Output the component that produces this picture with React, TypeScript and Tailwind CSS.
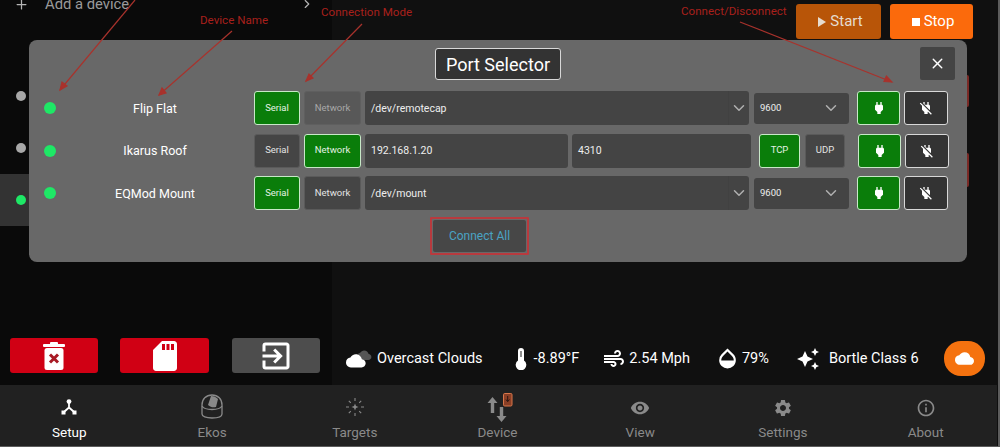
import { ChevronDown, ChevronRight, Plus, X } from "lucide-react";
import {
  MdAir,
  MdAutoAwesome,
  MdCloud,
  MdExitToApp,
  MdInfoOutline,
  MdOpacity,
  MdPower,
  MdPowerOff,
  MdSdCard,
  MdSettings,
  MdVisibility,
} from "react-icons/md";

const CLOUD =
  "M19.35 10.04C18.67 6.59 15.64 4 12 4 9.11 4 6.6 5.64 5.35 8.04 2.34 8.36 0 10.91 0 14c0 3.31 2.69 6 6 6h13c2.76 0 5-2.24 5-5 0-2.64-2.05-4.78-4.65-4.96z";

function TrashIcon() {
  return (
    <svg width="24" height="30" viewBox="0 0 24 30">
      <rect x="1" y="3" width="22" height="3" rx="1" fill="#fff" />
      <rect x="8" y="1" width="8" height="3" rx="1" fill="#fff" />
      <rect x="2.5" y="7" width="19" height="22" rx="2.5" fill="#fff" />
      <path d="M8 13.5l8 8M16 13.5l-8 8" stroke="#a81a24" strokeWidth="3" />
    </svg>
  );
}

function OvercastIcon() {
  return (
    <svg width="26" height="20" viewBox="0 0 26 20">
      <path d={CLOUD} fill="#555" transform="translate(11 -1) scale(0.6)" />
      <path d={CLOUD} fill="#fff" transform="translate(0 2) scale(0.82)" />
    </svg>
  );
}

function ThermometerIcon() {
  return (
    <svg width="12" height="22" viewBox="0 0 12 22">
      <path d="M3 3a3 3 0 0 1 6 0v9.6a5.3 5.3 0 1 1-6 0z" fill="#fff" />
      <rect x="5.4" y="3" width="1.2" height="6" fill="#444" />
    </svg>
  );
}

function HubIcon() {
  return (
    <svg width="16" height="16" viewBox="0 0 16 16" fill="#fff">
      <circle cx="8" cy="2.6" r="2.4" />
      <path d="M8 4v4.5L3.5 12.5M8 8.5l4.5 4" stroke="#fff" strokeWidth="1.8" fill="none" />
      <rect x="0.5" y="11.5" width="4" height="4" />
      <rect x="11.5" y="11.5" width="4" height="4" />
    </svg>
  );
}

function DomeIcon() {
  return (
    <svg width="22" height="25" viewBox="0 0 22 25" fill="none" stroke="#8a8a8a" strokeWidth="1.3">
      <path d="M1 11C1 5 5 1 11 1s10 4 10 10v9c0 2.5-4 4-10 4S1 22.5 1 20z" />
      <path d="M1 12c1.5 2.5 5 3.5 10 3.5s8.5-1 10-3.5" />
      <path d="M7 11l3-9c3 0 5 1 7 3l-2 8c-3 .6-5 .6-8-2z" fill="#8a8a8a" stroke="none" />
    </svg>
  );
}

function TargetIcon() {
  return (
    <svg width="18" height="18" viewBox="0 0 18 18" fill="#8a8a8a" stroke="#8a8a8a">
      <path d="M9 5.5L10 8l2.5 1L10 10l-1 2.5L8 10 5.5 9 8 8z" stroke="none" />
      <path
        d="M9 0v3M9 15v3M0 9h3M15 9h3M2.8 2.8l2 2M13.2 13.2l2 2M15.2 2.8l-2 2M4.800 13.2l-2 2"
        strokeWidth="1.1"
        fill="none"
      />
    </svg>
  );
}

function DeviceIcon() {
  return (
    <svg width="32" height="30" viewBox="0 0 32 30">
      <path d="M11.5 4l5 6h-3.300v10H9.800V10H6.500z" fill="#8a8a8a" />
      <path d="M18.800 14h3.400v9h3.300l-5 6-5-6h3.300z" fill="#8a8a8a" />
      <rect x="22.500" y="0.500" width="8.500" height="12.500" rx="1.200" fill="#8a3f26" stroke="#d9774b" />
      <path d="M26.700 3v5M25 6.500l1.700 2.200 1.700-2.200" stroke="#2a1410" strokeWidth="1" fill="none" />
    </svg>
  );
}

function ModeButton({
  label,
  active,
  disabled,
  className,
}: {
  label: string;
  active?: boolean;
  disabled?: boolean;
  className: string;
}) {
  return (
    <button
      className={`${className} h-full shrink-0 rounded-[3px] border text-[9.500px] ${
        active
          ? "border-[#c8e8c8] bg-[#0a7d0a] text-[#e4f2e4]"
          : disabled
            ? "border-[#5f5f5f] bg-[#585858] text-[#a8a8a8]"
            : "border-[#5a5a5a] bg-[#454545] text-[#e4e4e4]"
      }`}
    >
      {label}
    </button>
  );
}

function ConnectButtons({ className }: { className?: string }) {
  return (
    <div className={`flex h-full shrink-0 gap-1 ${className ?? ""}`}>
      <button className="flex h-full w-[43px] items-center justify-center rounded-[3px] border border-[#c8e8c8] bg-[#0a7d0a]">
        <MdPower size={16} color="#fff" />
      </button>
      <button className="flex h-full w-[44px] items-center justify-center rounded-[3px] border border-[#d8d8d8] bg-[#333333]">
        <MdPowerOff size={16} color="#fff" />
      </button>
    </div>
  );
}

function TextField({ value, className }: { value: string; className: string }) {
  return (
    <div className={`${className} flex h-full items-center rounded-[3px] bg-[#444444] pl-[6px] pt-px text-[10.500px] text-[#eeeeee]`}>
      {value}
    </div>
  );
}

function SerialRow({ name, port, networkDisabled }: { name: string; port: string; networkDisabled?: boolean }) {
  return (
    <div className="flex h-[34px] items-center">
      <span className="ml-[15px] h-3 w-3 shrink-0 rounded-full bg-[#1ee866]" />
      <span className="w-[198px] shrink-0 pt-[2px] text-center text-[12.500px] text-white">{name}</span>
      <ModeButton label="Serial" active className="w-[46px]" />
      <ModeButton label="Network" disabled={networkDisabled} className="ml-1 w-[57px]" />
      <div className="ml-1 flex h-full w-[384px] shrink-0">
        <TextField value={port} className="flex-1 rounded-r-none" />
        <div className="flex w-[21px] items-center justify-center rounded-r-[3px] border-l border-[#414141] bg-[#444444]">
          <ChevronDown size={18} color="#b0b0b0" />
        </div>
      </div>
      <div className="ml-[5px] flex h-[31px] w-[95px] shrink-0 items-center justify-between rounded-[3px] bg-[#444444] pl-[6px] pr-[9px] text-[9.500px] text-[#eeeeee]">
        9600
        <ChevronDown size={18} color="#b0b0b0" />
      </div>
      <ConnectButtons className="ml-2" />
    </div>
  );
}

function NetworkRow() {
  return (
    <div className="flex h-[34px] items-center">
      <span className="ml-[15px] h-3 w-3 shrink-0 rounded-full bg-[#1ee866]" />
      <span className="w-[198px] shrink-0 pt-[2px] text-center text-[12.500px] text-white">Ikarus Roof</span>
      <ModeButton label="Serial" className="w-[46px]" />
      <ModeButton label="Network" active className="ml-1 w-[57px]" />
      <TextField value="192.168.1.20" className="ml-1 w-[203px] shrink-0" />
      <TextField value="4310" className="ml-1 w-[179px] shrink-0" />
      <ModeButton label="TCP" active className="ml-2 w-[41px]" />
      <ModeButton label="UDP" className="ml-[5px] w-[40px]" />
      <ConnectButtons className="ml-[13px]" />
    </div>
  );
}

function PortSelector() {
  return (
    <div className="absolute left-[29px] top-[40px] h-[222px] w-[938px] rounded-lg bg-[#686868]">
      <div className="grid grid-cols-[1fr_126px_1fr] px-3 pt-[7px]">
        <span />
        <div className="mt-px flex h-8 items-center justify-center rounded-[3px] border border-[#d8d8d8] bg-[#333333] text-[18px] text-white">
          Port Selector
        </div>
        <button className="flex h-[33px] w-[35px] items-center justify-center justify-self-end rounded-[2px] bg-[#444444]">
          <X size={17} color="#fff" strokeWidth={2} />
        </button>
      </div>
      <div className="mt-[11px] flex flex-col gap-[8.500px]">
        <SerialRow name="Flip Flat" port="/dev/remotecap" networkDisabled />
        <NetworkRow />
        <SerialRow name="EQMod Mount" port="/dev/mount" />
      </div>
      <div className="ml-[401px] mt-[7px] h-[38px] w-[99px] rounded-[1px] border-2 border-[#b83a3e] p-px">
        <button className="h-full w-full rounded-[2px] bg-[#474747] text-[12px] text-[#4aa3c4]">Connect All</button>
      </div>
    </div>
  );
}

function Annotations() {
  return (
    <>
      <svg className="absolute left-0 top-0" width="1000" height="447" fill="none" stroke="#a8322c" strokeWidth="1.200">
        <path d="M135 0L60 90" />
        <path d="M60 90l2-8 5 4z" fill="#a8322c" />
        <path d="M232 31L159 95" />
        <path d="M159 95l3-7 4 5z" fill="#a8322c" />
        <path d="M362 24L306 81" />
        <path d="M306 81l3-7 4 4z" fill="#a8322c" />
        <path d="M740 22L892 82" />
        <path d="M892 82l-8-.5 2.400-5.500z" fill="#a8322c" />
      </svg>
      <span className="absolute left-[200px] top-[12px] text-[11.600px] leading-4 text-[#a8201c]">Device Name</span>
      <span className="absolute left-[321px] top-[4px] text-[11.600px] leading-4 text-[#a8201c]">Connection Mode</span>
      <span className="absolute left-[681px] top-[3px] text-[11.600px] leading-4 text-[#a8201c]">Connect/Disconnect</span>
    </>
  );
}

const tabs = [
  { label: "Setup", icon: <HubIcon />, iconClass: "pb-[8px]", active: true },
  { label: "Ekos", icon: <DomeIcon />, iconClass: "pb-[4px]" },
  { label: "Targets", icon: <TargetIcon />, iconClass: "pb-[7px]" },
  { label: "Device", icon: <DeviceIcon />, iconClass: "pb-0" },
  { label: "View", icon: <MdVisibility size={20} color="#8a8a8a" />, iconClass: "pb-[5px]" },
  { label: "Settings", icon: <MdSettings size={20} color="#8a8a8a" />, iconClass: "pb-[5px]" },
  { label: "About", icon: <MdInfoOutline size={20} color="#8a8a8a" />, iconClass: "pb-[5px]" },
];

export default function App() {
  return (
    <div className="h-[447px] w-[1000px] overflow-hidden bg-[#5c5c5c] font-['Roboto',sans-serif]">
      <div className="relative flex h-[446px] w-[998px] flex-col overflow-hidden bg-[#0e0e0e]">
        <div className="flex h-[385px]">
          <aside className="flex w-[332px] shrink-0 flex-col bg-[#0a0a0a]">
            <div className="-mt-[16px] flex h-10 items-center pl-[14px] pr-[18px] text-[14.800px] text-[#9a9a9a]">
              <Plus size={15} color="#b5b5b5" />
              <span className="ml-[16px] flex-1">Add a device</span>
              <ChevronRight size={14} color="#b5b5b5" />
            </div>
            <div className="mt-[46px] flex flex-col">
              <div className="flex h-[52px] items-center pl-[16px]">
                <span className="h-[10px] w-[10px] rounded-full bg-[#a8a8a8]" />
              </div>
              <div className="flex h-[52px] items-center pl-[16px]">
                <span className="h-[10px] w-[10px] rounded-full bg-[#a8a8a8]" />
              </div>
              <div className="flex h-[52px] items-center bg-[#333333] pl-[16px]">
                <span className="h-[10px] w-[10px] rounded-full bg-[#1ee866]" />
              </div>
            </div>
            <div className="mt-auto flex pb-3 pl-[10px]">
              <button className="flex h-[35px] w-[88px] items-center justify-center rounded-[3px] bg-[#d00014]">
                <TrashIcon />
              </button>
              <button className="ml-[22px] flex h-[35px] w-[89px] items-center justify-center rounded-[3px] bg-[#d00014]">
                <MdSdCard size={36} color="#fff" />
              </button>
              <button className="ml-[23px] flex h-[35px] w-[88px] items-center justify-center rounded-[3px] bg-[#4d4d4d]">
                <MdExitToApp size={36} color="#fff" />
              </button>
            </div>
          </aside>

          <main className="flex flex-1 flex-col justify-between bg-[#101010]">
            <div className="flex justify-end gap-[9px] pr-[25px] pt-1">
              <button className="flex h-[35px] w-[85px] items-center justify-center gap-1 rounded-[3px] bg-[#b85508] pl-1 text-[15px] text-[#e6dccf]">
                <span className="h-0 w-0 border-y-[5px] border-l-[8px] border-y-transparent border-l-[#e6dccf]" />
                Start
              </button>
              <button className="flex h-[35px] w-[83px] items-center justify-center gap-1 rounded-[3px] bg-[#fb6a0c] pl-[3px] text-[15px] text-white">
                <span className="h-2 w-2 bg-white" />
                Stop
              </button>
            </div>

            <div className="flex items-center pb-[9px] pl-[14px] pr-[13px] text-[14.500px] text-white">
              <OvercastIcon />
              <span className="ml-[5px] pt-px">Overcast Clouds</span>
              <span className="ml-[32px]">
                <ThermometerIcon />
              </span>
              <span className="ml-[7px] pt-px">-8.89°F</span>
              <MdAir size={24} className="ml-[23px]" />
              <span className="ml-[3px] pt-px">2.54 Mph</span>
              <MdOpacity size={25} className="ml-[25px]" />
              <span className="ml-[2px] pt-px">79%</span>
              <MdAutoAwesome size={24} className="ml-[27px]" />
              <span className="ml-[9px] pt-px">Bortle Class 6</span>
              <button className="ml-auto flex h-[35px] w-[41px] items-center justify-center rounded-[17px] bg-[#f5720f]">
                <MdCloud size={19} color="#fff" />
              </button>
            </div>
          </main>
        </div>

        <nav className="-ml-[2px] grid h-[61px] w-[999px] shrink-0 grid-cols-7 bg-[#212121]">
          {tabs.map((tab) => (
            <div key={tab.label} className="flex flex-col items-center">
              <div className={`flex h-[38px] items-end ${tab.iconClass}`}>{tab.icon}</div>
              <span className={`mt-px text-[13.500px] leading-4 ${tab.active ? "text-white" : "text-[#8a8a8a]"}`}>
                {tab.label}
              </span>
            </div>
          ))}
        </nav>

        <span className="absolute left-[967px] top-[75px] h-[32px] w-[2px] rounded-r bg-[#7a2a26]" />
        <span className="absolute left-[967px] top-[153px] h-[34px] w-[2px] rounded-r bg-[#7a2a26]" />
        <PortSelector />
        <Annotations />
      </div>
    </div>
  );
}
